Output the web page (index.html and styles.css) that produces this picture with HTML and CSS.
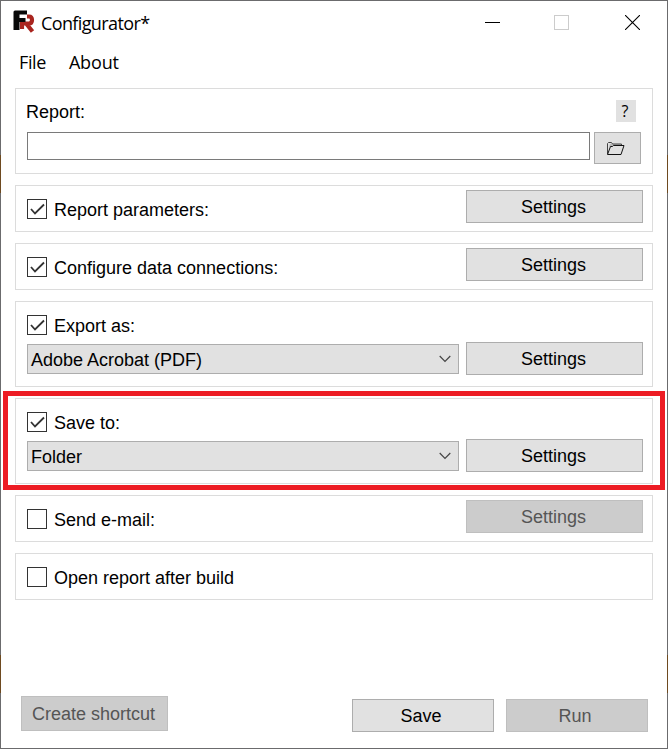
FILE: index.html
```html
<!DOCTYPE html>
<html lang="en">
<head>
<meta charset="utf-8">
<title>Configurator*</title>
<link rel="stylesheet" href="styles.css">
</head>
<body>
<main class="window">
  <header class="titlebar">
    <svg class="logo" width="22" height="24" viewBox="0 0 22 24">
      <path fill="none" stroke="#a9251f" stroke-width="4.200" d="M14 6.500h2q3 0 3 3.500t-3 3.500H9V19M13.500 14l6 7.500"/>
      <path fill="#080808" d="M.5 2q0-1.500 1.500-1.500h12v4H6.500v3.500h6v4h-6V20h-6z"/>
    </svg>
    <h1 class="title">Configurator*</h1>
    <div class="controls">
      <svg width="15" height="15" shape-rendering="crispEdges"><path d="M0 7.5h15" stroke="#000"/></svg>
      <svg width="15" height="15" shape-rendering="crispEdges"><path d="M.5.5h14v14H.5z" fill="none" stroke="#ccc"/></svg>
      <svg width="15" height="15"><path d="M0 0l15 15M15 0L0 15" stroke="#000" stroke-width="1.1"/></svg>
    </div>
  </header>
  <nav class="menu"><span class="file">File</span><span class="about">About</span></nav>

  <div class="panels">
    <section class="panel tall">
      <div class="report-head"><span class="report-label">Report:</span><button class="help">?</button></div>
      <div class="report-row">
        <input class="path" type="text" aria-label="Report">
        <button class="btn browse" aria-label="Browse">
          <svg width="19" height="15" viewBox="0 0 19 15" fill="none">
            <path d="M4 3h11v3H3z" fill="#bbb"/>
            <path d="M1.500 13V2.500l1-1h3l1 1.500h9v1.500" stroke="#444"/>
            <path d="M1.500 13.500l3-8h2l1-1h10.500l-3 9z" stroke="#111" fill="#e1e1e1"/>
          </svg>
        </button>
      </div>
    </section>

    <section class="panel">
      <label class="check"><span class="box"><svg width="18" height="18"><path d="M3 9l4 4.500 9-9" /></svg></span><span class="caption">Report parameters:</span></label>
      <button class="btn settings">Settings</button>
    </section>

    <section class="panel">
      <label class="check"><span class="box"><svg width="18" height="18"><path d="M3 9l4 4.500 9-9" /></svg></span><span class="caption">Configure data connections:</span></label>
      <button class="btn settings">Settings</button>
    </section>

    <section class="panel tall">
      <label class="check"><span class="box"><svg width="18" height="18"><path d="M3 9l4 4.500 9-9" /></svg></span><span class="caption">Export as:</span></label>
      <div class="choice">
        <div class="combo"><span>Adobe Acrobat (PDF)</span><svg width="12" height="8"><path d="M.7 1l5.300 5.300L11.300 1"/></svg></div>
        <button class="btn settings">Settings</button>
      </div>
    </section>

    <section class="panel tall marked">
      <label class="check"><span class="box"><svg width="18" height="18"><path d="M3 9l4 4.500 9-9" /></svg></span><span class="caption">Save to:</span></label>
      <div class="choice">
        <div class="combo"><span>Folder</span><svg width="12" height="8"><path d="M.7 1l5.300 5.300L11.300 1"/></svg></div>
        <button class="btn settings">Settings</button>
      </div>
    </section>

    <section class="panel">
      <label class="check"><span class="box"></span><span class="caption">Send e-mail:</span></label>
      <button class="btn settings" disabled>Settings</button>
    </section>

    <section class="panel">
      <label class="check"><span class="box"></span><span class="caption">Open report after build</span></label>
    </section>
  </div>

  <footer class="footer">
    <button class="btn shortcut" disabled>Create shortcut</button>
    <button class="btn action">Save</button>
    <button class="btn action" disabled>Run</button>
  </footer>
</main>
</body>
</html>
```
FILE: styles.css
```css
* { box-sizing: border-box; }

body {
  display: flow-root;
  height: 749px;
  margin: 0;
  background: linear-gradient(#6b6b6d 155px, #6e4a20 155px 193px, #6b6b6d 193px 655px, #6e4a20 655px 693px, #6b6b6d 693px);
  color: #000;
  font: 18px/22px "Liberation Sans", Arial, sans-serif;
}

.window {
  display: flex;
  flex-direction: column;
  width: 666px;
  height: 747px;
  margin: 1px;
  background: #fff;
}

.titlebar { display: flex; height: 48px; padding-left: 12px; }
.logo { margin-top: 9px; flex: none; }

.title {
  margin: 10px 0 0 6px;
  font: 400 18px/24px "Open Sans", "Segoe UI", sans-serif;
  letter-spacing: -0.62px;
}

.controls { display: flex; gap: 54px; margin: 14px 27px 0 auto; }
.controls svg { flex: none; }
.controls svg:nth-child(2) { margin-right: 2px; }

.menu {
  display: flex;
  gap: 23px;
  height: 39px;
  padding: 1px 0 0 18px;
  font: 18px/24px "Open Sans", "Segoe UI", sans-serif;
}
.file { letter-spacing: -0.4px; }
.about { letter-spacing: -0.15px; }

.panels { display: flex; flex-direction: column; gap: 11px; margin: 0 14px; }

.panel {
  display: flex;
  position: relative;
  justify-content: space-between;
  height: 47px;
  padding: 4px 9px 0 11px;
  border: 1px solid #dcdcdc;
}
.panel.tall { flex-direction: column; justify-content: flex-start; height: 86px; }

.check { display: flex; align-items: center; gap: 7px; height: 22px; margin-top: 9px; padding-top: 1px; }
.box { width: 20px; height: 20px; margin-top: -3px; border: 1px solid #333; }
.box svg { display: block; fill: none; stroke: #333; stroke-width: 1.8; }
.caption { margin-top: -2px; }

.btn {
  flex: none;
  height: 33px;
  padding: 0 2px 0 0;
  border: 1px solid #adadad;
  border-radius: 0;
  background: #e1e1e1;
  color: #000;
  font: inherit;
}
.btn:disabled { border-color: #bfbfbf; background: #ccc; color: #555; }
.settings { width: 177px; }

.choice { display: flex; justify-content: space-between; margin-top: 5px; }
.combo {
  display: flex;
  align-items: center;
  justify-content: space-between;
  width: 432px;
  height: 30px;
  margin-top: 2px;
  padding: 1px 7px 0 3px;
  border: 1px solid #adadad;
  background: #e1e1e1;
}
.combo svg { margin-top: -2px; fill: none; stroke: #444; stroke-width: 1.2; }

.report-head { display: flex; justify-content: space-between; height: 22px; margin: 7px 7px 0 -1px; }
.report-label { padding-top: 1px; }
.help {
  width: 20px;
  height: 22px;
  padding: 0 2px 0 0;
  border: 0;
  background: #e1e1e1;
  font: 16px/22px "Open Sans", "Segoe UI", sans-serif;
}
.report-row { display: flex; gap: 4px; margin-top: 10px; }
.path { width: 563px; height: 28px; border: 1px solid #7a7a7a; border-radius: 0; background: #fff; }
.browse { display: flex; align-items: center; width: 47px; height: 32px; padding-left: 11px; }

.marked::after {
  content: "";
  position: absolute;
  inset: -8px -13px -7px -13px;
  border: 5px solid #ed1c24;
  pointer-events: none;
}

.footer { display: flex; align-items: flex-start; gap: 12px; margin: auto 19px 16px 20px; }
.shortcut { width: 147px; height: 35px; margin-right: auto; }
.footer .action { width: 142px; margin-top: 3px; padding-right: 4px; }
```
